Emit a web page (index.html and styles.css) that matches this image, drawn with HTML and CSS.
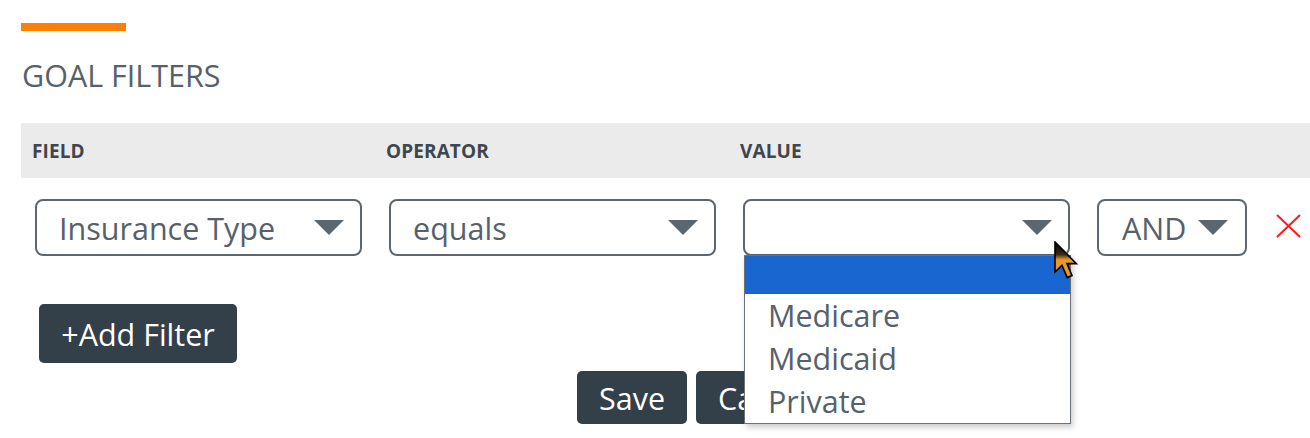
FILE: index.html
```html
<!DOCTYPE html>
<html lang="en">
<head>
<meta charset="utf-8">
<title>Goal Filters</title>
<link rel="stylesheet" href="styles.css">
</head>
<body>
<div class="page">
  <div class="accent"></div>
  <h2 class="title">GOAL FILTERS</h2>
  <div class="filters">
    <div class="thead">
      <div class="th">FIELD</div>
      <div class="th">OPERATOR</div>
      <div class="th">VALUE</div>
      <div class="th"></div>
    </div>
    <div class="row">
      <div class="cell">
        <div class="select wide"><span class="val">Insurance Type</span><span class="caret"></span></div>
      </div>
      <div class="cell">
        <div class="select wide"><span class="val">equals</span><span class="caret"></span></div>
      </div>
      <div class="cell">
        <div class="select wide open"><span class="val"></span><span class="caret"></span>
          <ul class="menu">
            <li class="opt active">&nbsp;</li>
            <li class="opt">Medicare</li>
            <li class="opt">Medicaid</li>
            <li class="opt">Private</li>
          </ul>
          <svg class="cursor" width="26" height="40" viewBox="0 0 13 20">
            <defs>
              <linearGradient id="cg" x1="0" y1="0" x2="0" y2="1">
                <stop offset="0" stop-color="#000"/>
                <stop offset="0.35" stop-color="#3a2a10"/>
                <stop offset="0.5" stop-color="#e8982a"/>
                <stop offset="1" stop-color="#e8982a"/>
              </linearGradient>
            </defs>
            <path d="M0.5 0.5 L0.5 15.5 L4 12.2 L6.6 18.3 L9 17.3 L6.5 11.3 L11.2 11.3 Z" fill="url(#cg)" stroke="#000" stroke-width="0.8" stroke-linejoin="miter"/>
          </svg>
        </div>
      </div>
      <div class="cell last">
        <div class="select small"><span class="val">AND</span><span class="caret"></span></div>
        <svg class="remove" width="25" height="24" viewBox="0 0 25 24"><path d="M1 1 L24 23 M24 1 L1 23" stroke="#ff1a1a" stroke-width="2" fill="none"/></svg>
      </div>
    </div>
  </div>
  <div class="add-row"><button class="btn add">+Add Filter</button></div>
  <div class="actions"><button class="btn save">Save</button><button class="btn cancel">Cancel</button></div>
</div>
</body>
</html>
```

FILE: styles.css
```css
* { box-sizing: border-box; }
html, body { margin: 0; padding: 0; background: #fff; }
body {
  font-family: "Open Sans", "Liberation Sans", sans-serif;
  color: #56616c;
  overflow: hidden;
}
.page {
  padding: 23px 0 0 21px;
  width: 1310px;
  height: 438px;
}
.accent {
  width: 105px;
  height: 8px;
  background: #ff8000;
}
.title {
  margin: 23px 0 0 1px;
  font-size: 30.5px;
  font-weight: 400;
  line-height: 42px;
  color: #56616c;
}
.filters {
  margin-top: 27px;
  width: 1289px;
}
.thead {
  display: grid;
  grid-template-columns: 354px 354px 354px 1fr;
  height: 55px;
  background: #ebebeb;
  align-items: center;
}
.th {
  padding-left: 11px;
  font-size: 19px;
  font-weight: 700;
  color: #3f464d;
  letter-spacing: 0.1px;
}
.row {
  display: grid;
  grid-template-columns: 354px 354px 354px 1fr;
  padding-top: 21px;
}
.cell {
  padding-left: 14px;
  display: flex;
  align-items: center;
}
.select {
  position: relative;
  height: 57px;
  border: 2px solid #5c6670;
  border-radius: 8px;
  display: flex;
  align-items: center;
  justify-content: space-between;
  padding: 0 16px 0 22px;
  font-size: 30.5px;
  color: #56616c;
  background: #fff;
}
.select.wide { width: 327px; }
.select.small { width: 150px; padding: 0 17px 0 23px; }
.val { line-height: 40px; }
.caret {
  width: 0;
  height: 0;
  border-left: 15px solid transparent;
  border-right: 15px solid transparent;
  border-top: 15px solid #5a6670;
}
.remove { margin-left: 29px; margin-top: -4px; }
.menu {
  position: absolute;
  left: -1px;
  top: 54px;
  width: 327px;
  margin: 0;
  padding: 0;
  list-style: none;
  background: #fff;
  border: 1px solid #6b737a;
  box-shadow: 2px 3px 6px rgba(0,0,0,0.22);
  z-index: 5;
}
.opt {
  height: 43px;
  line-height: 42px;
  padding-left: 23px;
  font-size: 30.5px;
  color: #56616c;
}
.opt.active {
  height: 38px;
  background: #1a66d0;
}
.cursor {
  position: absolute;
  left: 309px;
  top: 40px;
  z-index: 6;
}
.btn {
  font-family: "Open Sans", "Liberation Sans", sans-serif;
  font-size: 30.5px;
  color: #fff;
  background: #333f49;
  border: none;
  border-radius: 5px;
  line-height: 40px;
  cursor: pointer;
}
.add-row { padding: 48px 0 0 18px; }
.add { height: 59px; width: 198px; padding: 0; }
.actions {
  display: flex;
  gap: 9px;
  padding: 8px 0 0 556px;
}
.save, .cancel { height: 53px; padding: 0 22px; }
.save { width: 110px; }
```
